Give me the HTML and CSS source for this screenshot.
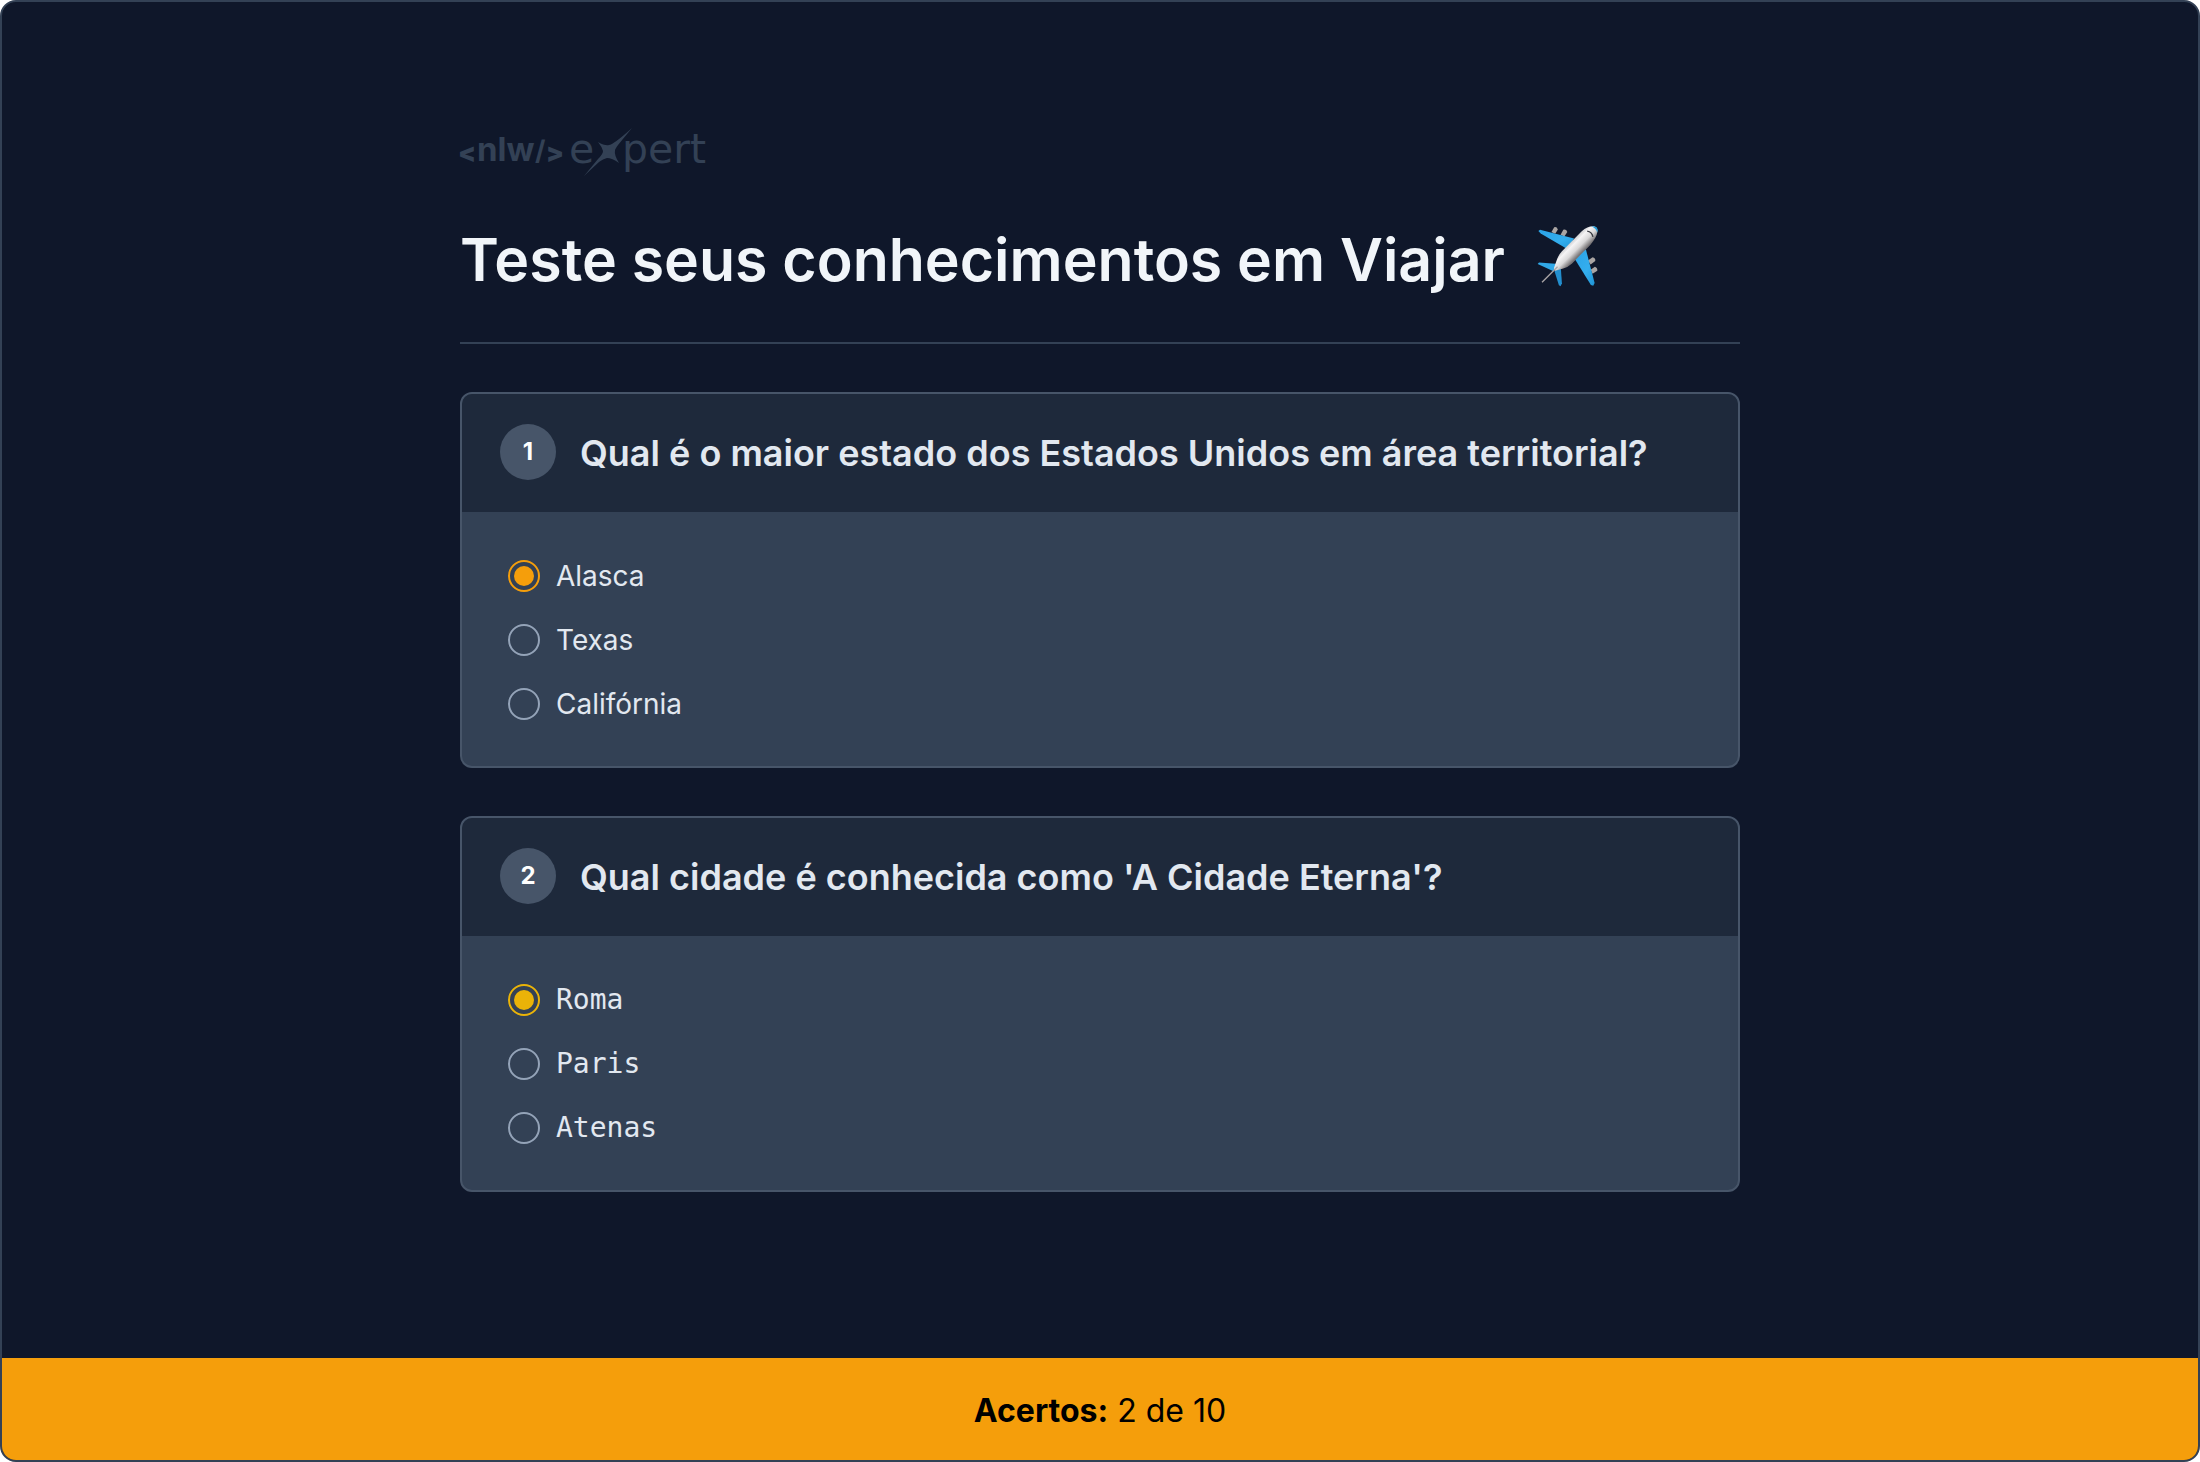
FILE: index.html
```html
<!DOCTYPE html>
<html lang="pt-BR">
<head>
  <meta charset="utf-8">
  <meta name="viewport" content="width=device-width, initial-scale=1">
  <title>Quiz de Viajar</title>
  <link rel="stylesheet" href="styles.css">
</head>
<body>
  <div class="app">
    <main class="quiz">
      <svg class="logo" viewBox="0 0 250 48" role="img" aria-label="nlw expert">
        <g class="logo-nlw">
          <text class="logo-bracket" x="-2" y="34">&lt;</text>
          <text x="17" y="33">nlw</text>
          <text class="logo-slash" x="75" y="32">/</text>
          <text class="logo-bracket" x="86" y="34">&gt;</text>
        </g>
        <g class="logo-expert">
          <text x="109" y="35">e</text>
          <text x="162" y="35">pert</text>
        </g>
        <path d="M172 0 C163 11 156 19 155 22 Q154 27 159 35 Q152 30 147 30 Q143 31 139 34 L124 48 L138 31 Q143 26 143 23 Q142 19 138 14 Q145 18 149 17 Q153 17 172 0Z"/>
      </svg>

      <header class="title-row">
        <h1 class="title">Teste seus conhecimentos em Viajar</h1>
        <svg class="plane" viewBox="112 44 184 184" role="img" aria-label="Avião">
          <defs>
            <linearGradient id="fuselage" gradientUnits="userSpaceOnUse" x1="208" y1="94" x2="242" y2="128">
              <stop offset="0" stop-color="#c4c4c6"/>
              <stop offset=".3" stop-color="#f5f4f5"/>
              <stop offset=".65" stop-color="#d8d7d8"/>
              <stop offset="1" stop-color="#777476"/>
            </linearGradient>
            <linearGradient id="wing" x1="0" y1="0" x2="1" y2="1">
              <stop offset="0" stop-color="#2aa2e6"/>
              <stop offset=".6" stop-color="#34aeee"/>
              <stop offset="1" stop-color="#1f95d6"/>
            </linearGradient>
          </defs>
          <g fill="#aaa5a3">
            <path d="M155 65 L163 51 Q170 48 174 57 L166 70Z"/>
            <path d="M182 73 L190 58 Q199 56 202 65 L193 78Z"/>
            <path d="M263 149 L277 140 Q286 142 285 151 L271 161Z"/>
            <path d="M271 177 L284 168 Q292 171 291 180 L277 189Z"/>
          </g>
          <path fill="url(#wing)" d="M116 62 L121 58 L222 84 L203 116 L123 69Z"/>
          <path fill="url(#wing)" d="M257 116 L283 216 L279 224 L272 222 L221 140Z"/>
          <path fill="#31a9e8" d="M114 160 L118 155 L177 160 L161 181Z"/>
          <path fill="#238fce" d="M164 181 L182 162 L186 217 L182 226 L177 223Z"/>
          <path fill="url(#fuselage)" d="M162 172 L172 144 Q177 132 186 122 L244 63 Q263 47 280 48 Q294 51 291 65 Q289 82 270 103 L216 158 Q204 169 190 173 L166 180Z"/>
          <path fill="#239edc" d="M274 48 Q296 46 291 67 Q287 54 274 48Z"/>
          <path fill="none" stroke="#393b42" stroke-width="4" d="M261 62 Q275 64 278 79"/>
          <path fill="none" stroke="#aaa5a6" stroke-width="4" d="M127 214 L173 168"/>
        </svg>
      </header>

      <section class="card" role="radiogroup" aria-labelledby="q1">
        <header class="card-head">
          <span class="badge">1</span>
          <h2 class="question" id="q1">Qual é o maior estado dos Estados Unidos em área territorial?</h2>
        </header>
        <div class="options">
          <label class="option"><input class="radio" type="radio" name="estado" checked>Alasca</label>
          <label class="option"><input class="radio" type="radio" name="estado">Texas</label>
          <label class="option"><input class="radio" type="radio" name="estado">Califórnia</label>
        </div>
      </section>

      <section class="card" role="radiogroup" aria-labelledby="q2">
        <header class="card-head">
          <span class="badge">2</span>
          <h2 class="question" id="q2">Qual cidade é conhecida como 'A Cidade Eterna'?</h2>
        </header>
        <div class="options options-mono">
          <label class="option"><input class="radio" type="radio" name="cidade" checked>Roma</label>
          <label class="option"><input class="radio" type="radio" name="cidade">Paris</label>
          <label class="option"><input class="radio" type="radio" name="cidade">Atenas</label>
        </div>
      </section>
    </main>

    <footer class="score"><strong>Acertos:</strong> 2 de 10</footer>
  </div>
</body>
</html>
```
FILE: styles.css
```css
* {
  box-sizing: border-box;
}

body {
  margin: 0;
  background: #fff;
  font-family: Inter, sans-serif;
  color: #e2e8f0;
}

.app {
  display: flex;
  flex-direction: column;
  min-height: 100vh;
  border: 2px solid #334155;
  border-radius: 16px;
  overflow: hidden;
  background: #0f172a;
}

.quiz {
  display: flex;
  flex-direction: column;
  gap: 48px;
  width: 100%;
  max-width: 1280px;
  margin: 0 auto;
  padding: 126px 0 48px;
}

.logo {
  width: 250px;
  height: 48px;
  overflow: visible;
  fill: #334155;
}

.logo-nlw {
  font: 700 33px Inter, sans-serif;
}

.logo-bracket {
  font-size: 26px;
  font-weight: 900;
}

.logo-slash {
  font-size: 27px;
}

.logo-expert {
  font: 400 41px "DejaVu Sans", sans-serif;
}

.title-row {
  display: flex;
  align-items: center;
  gap: 32px;
  padding-bottom: 46px;
  border-bottom: 2px solid #334155;
}

.title {
  margin: 0;
  font-size: 59px;
  font-weight: 600;
  line-height: 72px;
  color: #f1f5f9;
}

.plane {
  flex: none;
  width: 62px;
  height: 62px;
  margin-bottom: 8px;
}

.card {
  border: 2px solid #475569;
  border-radius: 12px;
  overflow: hidden;
  background: #334155;
}

.card-head {
  display: flex;
  align-items: center;
  gap: 24px;
  padding: 30px 38px 32px;
  background: #1e293b;
}

.badge {
  display: grid;
  place-items: center;
  flex: none;
  width: 56px;
  height: 56px;
  border-radius: 50%;
  background: #475569;
  color: #fff;
  font-size: 24px;
  font-weight: 700;
  line-height: 32px;
}

.question {
  margin: 0;
  padding-top: 2px;
  font-size: 36px;
  font-weight: 600;
  line-height: 44px;
}

.options {
  display: flex;
  flex-direction: column;
  align-items: flex-start;
  gap: 32px;
  padding: 48px 46px 46px;
}

.options-mono {
  font-family: "DejaVu Sans Mono", monospace;
}

.option {
  display: flex;
  align-items: center;
  gap: 16px;
  font-size: 28px;
  line-height: 32px;
}

.radio {
  appearance: none;
  flex: none;
  width: 32px;
  height: 32px;
  margin: 0;
  padding: 4px;
  border: 2px solid #94a3b8;
  border-radius: 50%;
}

.radio:checked {
  border-color: #f59e0b;
  background: #f59e0b content-box;
}

.options-mono .radio:checked {
  border-color: #eab308;
  background-color: #eab308;
}

.score {
  margin-top: auto;
  padding: 33px 32px 29px;
  background: #f59e0b;
  color: #000;
  font-size: 32px;
  line-height: 40px;
  text-align: center;
}
```
